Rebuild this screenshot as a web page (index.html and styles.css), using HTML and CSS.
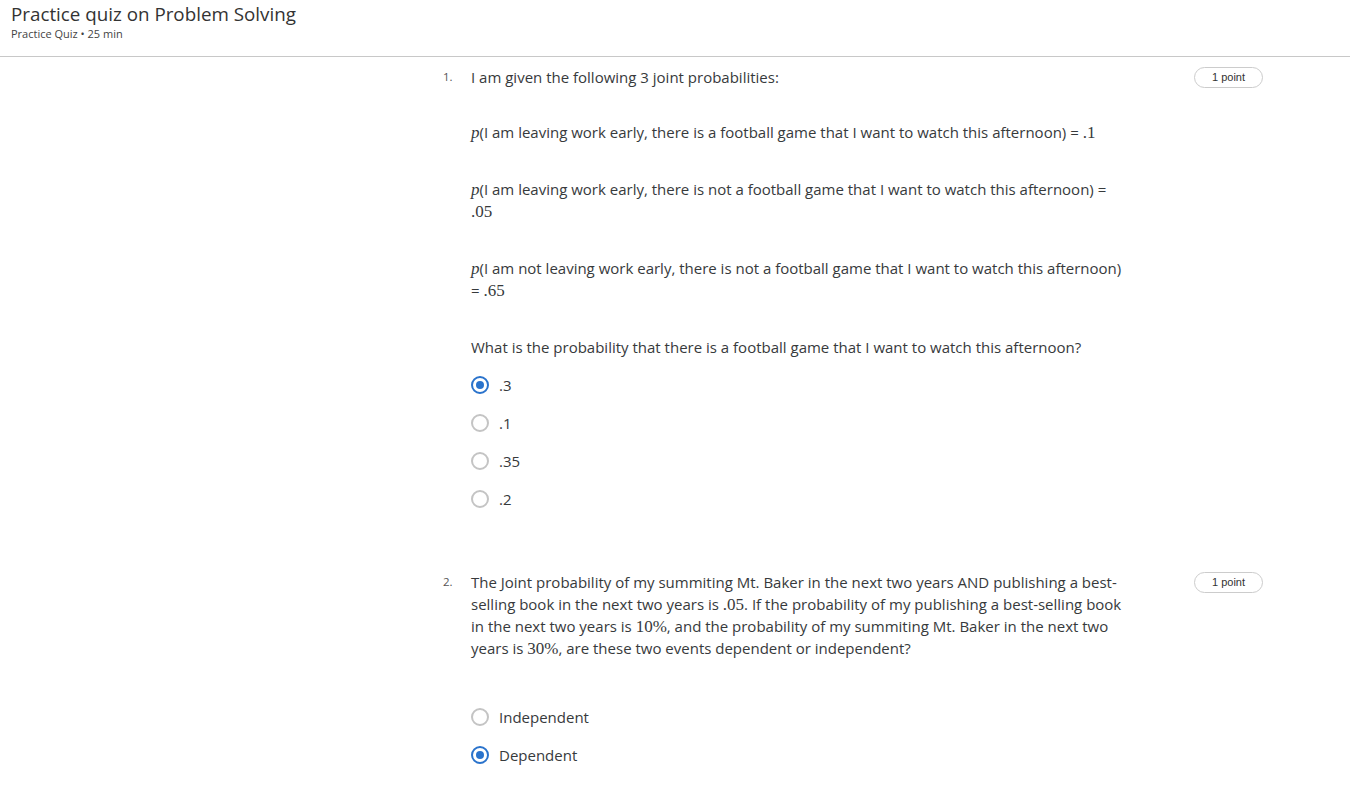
FILE: index.html
```html
<!DOCTYPE html>
<html>
<head>
<meta charset="utf-8">
<link rel="stylesheet" href="styles.css">
</head>
<body>
<header class="header">
  <h1 class="title">Practice quiz on Problem Solving</h1>
  <div class="subtitle">Practice Quiz • 25 min</div>
</header>
<main class="quiz">
  <section class="question q1">
    <div class="num">1.</div>
    <div class="body">
      <p class="para first">I am given the following 3 joint probabilities:</p>
      <p class="para"><span class="mi">p</span>(I am leaving work early, there is a football game that I want to watch this afternoon) = <span class="mn">.1</span></p>
      <p class="para"><span class="mi">p</span>(I am leaving work early, there is not a football game that I want to watch this afternoon) = <span class="mn">.05</span></p>
      <p class="para"><span class="mi">p</span>(I am not leaving work early, there is not a football game that I want to watch this afternoon) = <span class="mn">.65</span></p>
      <p class="para ask">What is the probability that there is a football game that I want to watch this afternoon?</p>
      <div class="options">
        <label class="option"><span class="radio checked"></span><span class="opt-text">.3</span></label>
        <label class="option"><span class="radio"></span><span class="opt-text">.1</span></label>
        <label class="option"><span class="radio"></span><span class="opt-text">.35</span></label>
        <label class="option"><span class="radio"></span><span class="opt-text">.2</span></label>
      </div>
    </div>
    <div class="points">1 point</div>
  </section>
  <section class="question q2">
    <div class="num">2.</div>
    <div class="body">
      <p class="para ask2">The Joint probability of my summiting Mt. Baker in the next two years AND publishing a best-selling book in the next two years is <span class="mn">.05</span>. If the probability of my publishing a best-selling book in the next two years is <span class="mn">10%</span>, and the probability of my summiting Mt. Baker in the next two years is <span class="mn">30%</span>, are these two events dependent or independent?</p>
      <div class="options">
        <label class="option"><span class="radio"></span><span class="opt-text">Independent</span></label>
        <label class="option"><span class="radio checked"></span><span class="opt-text">Dependent</span></label>
      </div>
    </div>
    <div class="points">1 point</div>
  </section>
</main>
</body>
</html>
```
FILE: styles.css
```css
* { box-sizing: border-box; }
html, body { margin: 0; padding: 0; background: #fff; }
body {
  font-family: "Open Sans", "Noto Sans", sans-serif;
  color: #373a3c;
}
.header {
  padding: 1px 11px 0;
  height: 57px;
  border-bottom: 1px solid #c8c8c8;
}
.title {
  margin: 0;
  font-size: 18.8px;
  font-weight: 400;
  line-height: 26px;
  color: #333;
}
.subtitle {
  font-size: 11px;
  line-height: 14px;
  color: #444;
}
.quiz {
  margin-left: 441px;
  width: 822px;
}
.question {
  display: flex;
  align-items: flex-start;
}
.q1 { padding-top: 9px; }
.q2 { padding-top: 53px; }
.num {
  width: 30px;
  flex: none;
  font-size: 11.5px;
  line-height: 22px;
  color: #555;
  padding-left: 2px;
}
.body {
  width: 656px;
  flex: none;
  font-size: 15px;
  line-height: 22px;
}
.para { margin: 0 0 35px; }
.para.first { margin-bottom: 33px; }
.para.ask { margin-bottom: 8px; }
.para.ask2 { margin-bottom: 39px; }
.mi {
  font-family: "Liberation Serif", "DejaVu Serif", serif;
  font-style: italic;
  font-size: 17px;
  line-height: 1;
}
.mn {
  font-family: "Liberation Serif", "DejaVu Serif", serif;
  font-size: 17px;
  line-height: 1;
}
.options { display: flex; flex-direction: column; }
.option {
  display: flex;
  align-items: center;
  height: 38px;
  gap: 10px;
}
.radio {
  width: 18px;
  height: 18px;
  border-radius: 50%;
  border: 2px solid #c4c4c4;
  flex: none;
  display: flex;
  align-items: center;
  justify-content: center;
}
.radio.checked { border-color: #2a73cc; }
.radio.checked::after {
  content: "";
  width: 8px;
  height: 8px;
  border-radius: 50%;
  background: #2a73cc;
}
.opt-text { color: #373a3c; }
.points {
  margin-left: auto;
  margin-top: 1px;
  width: 69px;
  height: 21px;
  border: 1px solid #ccc;
  border-radius: 11px;
  font-family: "Liberation Sans", Arial, sans-serif;
  font-size: 11px;
  line-height: 19px;
  text-align: center;
  color: #333;
}
```
